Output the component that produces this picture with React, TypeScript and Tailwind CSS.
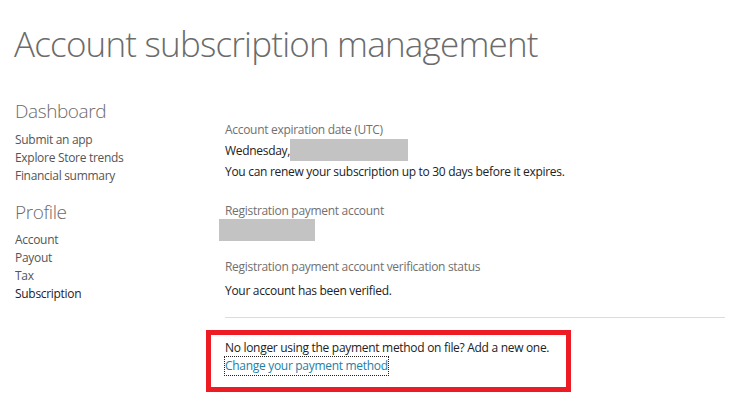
import React from "react";

const dashboardLinks = ["Submit an app", "Explore Store trends", "Financial summary"];
const profileLinks = ["Account", "Payout", "Tax"];

const App = () => {
  return (
    <div className="min-h-[409px] w-full bg-white font-['Open_Sans',sans-serif] text-[#222]">
      <h1 className="pl-[14px] pt-[22px] text-[35px] font-light leading-[44px] tracking-[-0.8px] text-[#6b6b6b]">
        Account subscription management
      </h1>

      <div className="mt-[33px] flex">
        {/* Sidebar nav */}
        <aside className="w-[206px] shrink-0 pl-[15px] tracking-[-0.3px]">
          <h2 className="text-[19px] font-light leading-[24px] tracking-[-0.4px] text-[#6b6b6b]">Dashboard</h2>
          <ul className="mt-[8px] text-[12px] leading-[18px] text-[#555]">
            {dashboardLinks.map((l) => (
              <li key={l}>{l}</li>
            ))}
          </ul>
          <h2 className="mt-[15px] text-[19px] font-light leading-[24px] tracking-[-0.4px] text-[#6b6b6b]">Profile</h2>
          <ul className="mt-[7px] text-[12px] leading-[18px] text-[#555]">
            {profileLinks.map((l) => (
              <li key={l}>{l}</li>
            ))}
            <li className="text-[#222]">Subscription</li>
          </ul>
        </aside>

        {/* Main content */}
        <main className="flex-1 pr-[11px] pt-[22px] text-[12px] leading-[18px] tracking-[-0.3px]">
          <div className="pl-[19px]">
            <p className="text-[#707070]">Account expiration date (UTC)</p>
            <div className="flex h-[22px] items-center">
              <span className="pt-[1px]">Wednesday,</span>
              <span className="h-[22px] w-[118px] bg-[#c3c3c3]" />
            </div>
            <p className="mt-[2px]">You can renew your subscription up to 30 days before it expires.</p>

            <p className="mt-[21px] text-[#707070]">Registration payment account</p>
            <div className="-ml-[6px] -mt-[1px] h-[22px] w-[96px] bg-[#c3c3c3]" />

            <p className="mt-[17px] text-[#707070]">Registration payment account verification status</p>
            <p className="mt-[6px]">Your account has been verified.</p>

            <div className="mt-[17px] h-px bg-[#dcdcdc]" />
          </div>

          <div className="mt-[12px] w-[365px] border-[5px] border-[#ed1c24] pb-[12px] pl-[14px] pt-[4px]">
            <p>No longer using the payment method on file? Add a new one.</p>
            <a href="#" className="inline-block text-[#1e7ea6] outline-1 outline-dotted outline-[#222]">
              Change your payment method
            </a>
          </div>
        </main>
      </div>
    </div>
  );
};

export default App;
